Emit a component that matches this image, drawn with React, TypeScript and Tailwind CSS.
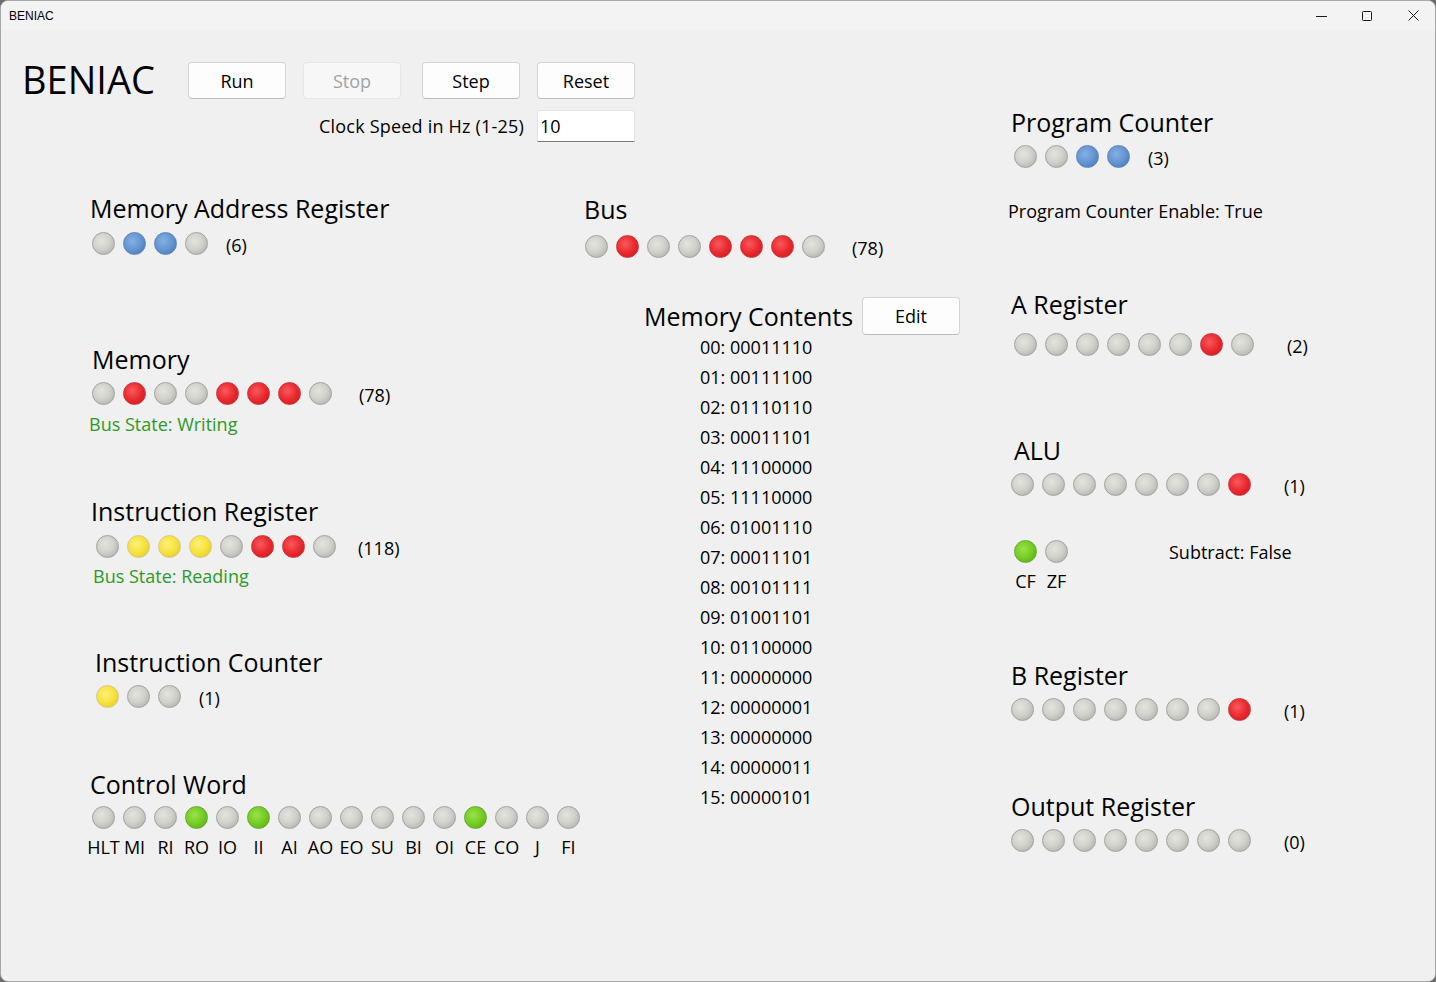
type Led = 'g' | 'b' | 'r' | 'y' | 'G';

const ledStyles: Record<Led, string> = {
  g: 'border-[#a2a29e] bg-[radial-gradient(circle_at_40%_38%,#e4e4de_0%,#d2d2cc_45%,#a8a8a3_100%)]',
  b: 'border-[#5f86b8] bg-[radial-gradient(circle_at_40%_38%,#86b0e4_0%,#6494d2_50%,#3f70b2_100%)]',
  r: 'border-[#c8383c] bg-[radial-gradient(circle_at_40%_38%,#f85a5e_0%,#ea2a2f_50%,#c4161c_100%)]',
  y: 'border-[#d6c890] bg-[radial-gradient(circle_at_40%_38%,#fdf07a_0%,#f6e23c_50%,#dcc41a_100%)]',
  G: 'border-[#68a83a] bg-[radial-gradient(circle_at_40%_38%,#9ae24c_0%,#74cc22_50%,#55a512_100%)]',
};

function Dot({ c }: { c: Led }) {
  return <div className={`h-[23px] w-[23px] shrink-0 rounded-full border ${ledStyles[c]}`} />;
}

function LedRow({ leds, value, className, valueClass }: { leds: string; value?: string; className: string; valueClass?: string }) {
  return (
    <div className={`flex h-[23px] items-center ${className}`}>
      <div className="flex gap-[8px]">
        {leds.split('').map((c, i) => (
          <Dot key={i} c={c as Led} />
        ))}
      </div>
      {value && <span className={`translate-y-[2px] text-[18px] leading-[23px] ${valueClass}`}>{value}</span>}
    </div>
  );
}

function Title({ children, className }: { children: string; className: string }) {
  return <div className={`whitespace-nowrap text-[25px] leading-[34px] ${className}`}>{children}</div>;
}

const memory = [
  '00011110', '00111100', '01110110', '00011101', '11100000', '11110000', '01001110', '00011101',
  '00101111', '01001101', '01100000', '00000000', '00000001', '00000000', '00000011', '00000101',
];

const controlLabels = ['HLT', 'MI', 'RI', 'RO', 'IO', 'II', 'AI', 'AO', 'EO', 'SU', 'BI', 'OI', 'CE', 'CO', 'J', 'FI'];

function Button({ label, disabled, className }: { label: string; disabled?: boolean; className?: string }) {
  return (
    <div
      className={`flex h-[37px] w-[98px] items-center justify-center rounded-[4px] border pt-[1px] text-[18px] ${
        disabled ? 'border-[#e6e6e6] bg-[#f7f7f7] text-[#a2a2a2]' : 'border-[#d4d4d4] border-b-[#bdbdbd] bg-[#fdfdfd] text-black'
      } ${className ?? ''}`}
    >
      {label}
    </div>
  );
}

export default function App() {
  return (
    <div className="h-[982px] w-[1436px] bg-[#6b6b6b] font-['Open_Sans',sans-serif] text-black">
      <div className="flex h-[982px] w-[1436px] flex-col overflow-hidden rounded-[8px] border border-[#a8a8a8] bg-[#f0f0f0]">
        {/* title bar */}
        <div className="flex h-[29px] shrink-0 items-center bg-[#f3f3f3]">
          <span className="ml-[8px] text-[12px] font-['Liberation_Sans',sans-serif]">BENIAC</span>
          <div className="ml-auto mr-[-1px] flex h-full items-center">
            <div className="flex h-full w-[46px] items-center justify-center">
              <svg width="11" height="10" viewBox="0 0 11 10"><path d="M0 5.5h11" stroke="#1a1a1a" strokeWidth="1" /></svg>
            </div>
            <div className="flex h-full w-[46px] items-center justify-center">
              <svg width="10" height="10" viewBox="0 0 10 10"><rect x="0.5" y="0.5" width="9" height="9" rx="1" fill="none" stroke="#1a1a1a" strokeWidth="1" /></svg>
            </div>
            <div className="flex h-full w-[46px] items-center justify-center">
              <svg width="11" height="11" viewBox="0 0 11 11"><path d="M0.5 0.5l10 10M10.5 0.5l-10 10" stroke="#1a1a1a" strokeWidth="1" /></svg>
            </div>
          </div>
        </div>

        <div className="flex">
          {/* left area */}
          <div className="flex w-[1005px] shrink-0 flex-col">
            {/* header */}
            <div className="mt-[25px] flex items-start">
              <div className="ml-[21px] w-[166px] text-[38px] leading-[48px]">BENIAC</div>
              <div className="mt-[7px] flex">
                <Button label="Run" />
                <Button label="Stop" disabled className="ml-[17px]" />
                <Button label="Step" className="ml-[21px]" />
                <Button label="Reset" className="ml-[17px]" />
              </div>
            </div>
            <div className="mt-[7px] flex w-[634px] items-center justify-end">
              <span className="text-[18px] leading-[24px] tracking-[0.2px]">Clock Speed in Hz (1-25)</span>
              <div className="ml-[13px] flex h-[32px] w-[98px] items-center rounded-t-[3px] border border-[#e2e2e2] border-b-[#7a7a7a] bg-white pl-[2px] text-[18px]">
                10
              </div>
            </div>

            {/* columns */}
            <div className="mt-[49px] flex">
              {/* left column */}
              <div className="ml-[87px] flex w-[495px] flex-col">
                <Title className="ml-[2px]">Memory Address Register</Title>
                <LedRow leds="gbbg" value="(6)" className="ml-[4px] mt-[7px]" valueClass="ml-[18px]" />

                <Title className="ml-[4px] mt-[87px]">Memory</Title>
                <LedRow leds="grggrrrg" value="(78)" className="ml-[4px] mt-[6px]" valueClass="ml-[27px]" />
                <div className="ml-[1px] mt-[7px] text-[18px] leading-[24px] text-[#2e9a26]">Bus State: Writing</div>

                <Title className="ml-[3px] mt-[58px]">Instruction Register</Title>
                <LedRow leds="gyyygrrg" value="(118)" className="ml-[8px] mt-[7px]" valueClass="ml-[22px]" />
                <div className="ml-[5px] mt-[6px] text-[18px] leading-[24px] text-[#2e9a26]">Bus State: Reading</div>

                <Title className="ml-[7px] mt-[57px]">Instruction Counter</Title>
                <LedRow leds="ygg" value="(1)" className="ml-[8px] mt-[6px]" valueClass="ml-[18px]" />

                <Title className="ml-[2px] mt-[59px]">Control Word</Title>
                <LedRow leds="gggGgGggggggGggg" className="ml-[4px] mt-[5px]" />
                <div className="ml-[4px] mt-[6px] flex gap-[8px]">
                  {controlLabels.map((l) => (
                    <div key={l} className="flex w-[23px] justify-center whitespace-nowrap text-[18px] leading-[24px]">
                      {l}
                    </div>
                  ))}
                </div>
              </div>

              {/* middle column */}
              <div className="flex flex-col">
                <Title className="ml-[1px] mt-[1px]">Bus</Title>
                <LedRow leds="grggrrrg" value="(78)" className="ml-[2px] mt-[9px]" valueClass="ml-[27px]" />

                <div className="mt-[39px] flex items-center">
                  <div className="ml-[61px] w-[218px] whitespace-nowrap text-[25px] leading-[34px]">Memory Contents</div>
                  <div className="flex h-[38px] w-[98px] items-center justify-center rounded-[4px] border border-[#d4d4d4] border-b-[#bdbdbd] bg-[#fdfdfd] pt-[1px] text-[18px]">
                    Edit
                  </div>
                </div>
                <div className="ml-[117px] mt-[-3px] flex flex-col">
                  {memory.map((m, i) => (
                    <div key={i} className="text-[18px] leading-[30px]">
                      {String(i).padStart(2, '0')}: {m}
                    </div>
                  ))}
                </div>
              </div>
            </div>
          </div>

          {/* right column */}
          <div className="mt-[75px] flex flex-col">
            <Title className="ml-[5px]">Program Counter</Title>
            <LedRow leds="ggbb" value="(3)" className="ml-[8px] mt-[6px]" valueClass="ml-[18px]" />
            <div className="ml-[2px] mt-[31px] text-[18px] leading-[24px]">Program Counter Enable: True</div>

            <Title className="ml-[5px] mt-[64px]">A Register</Title>
            <LedRow leds="ggggggrg" value="(2)" className="ml-[8px] mt-[12px]" valueClass="ml-[33px]" />

            <Title className="ml-[8px] mt-[77px]">ALU</Title>
            <LedRow leds="gggggggr" value="(1)" className="ml-[5px] mt-[6px]" valueClass="ml-[33px]" />

            <div className="ml-[8px] mt-[44px] flex h-[23px] items-center">
              <div className="flex gap-[8px]">
                <Dot c="G" />
                <Dot c="g" />
              </div>
              <span className="ml-[101px] translate-y-[1px] text-[18px] leading-[23px]">Subtract: False</span>
            </div>
            <div className="ml-[8px] mt-[6px] flex gap-[8px]">
              {['CF', 'ZF'].map((l) => (
                <div key={l} className="flex w-[23px] justify-center text-[18px] leading-[24px]">
                  {l}
                </div>
              ))}
            </div>

            <Title className="ml-[5px] mt-[65px]">B Register</Title>
            <LedRow leds="gggggggr" value="(1)" className="ml-[5px] mt-[6px]" valueClass="ml-[33px]" />

            <Title className="ml-[5px] mt-[68px]">Output Register</Title>
            <LedRow leds="gggggggg" value="(0)" className="ml-[5px] mt-[6px]" valueClass="ml-[33px]" />
          </div>
        </div>
      </div>
    </div>
  );
}
